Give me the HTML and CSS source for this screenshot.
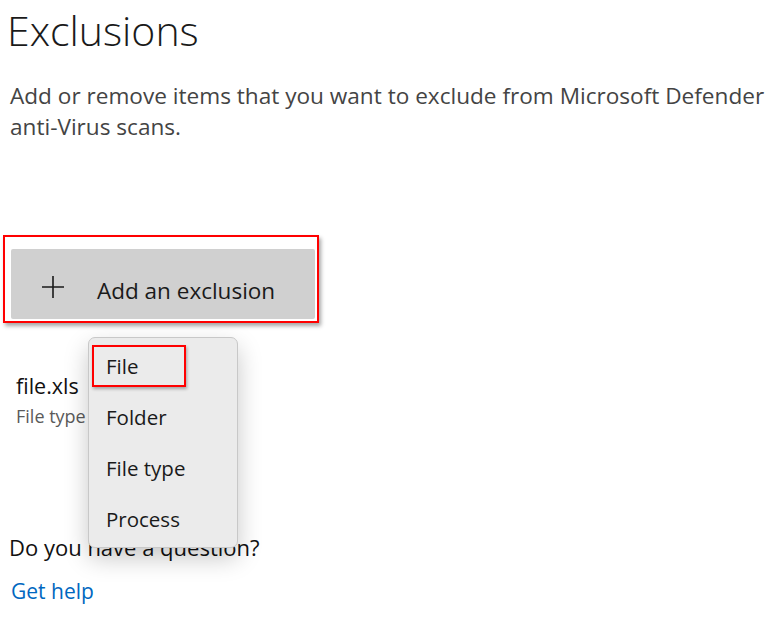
FILE: index.html
```html
<!DOCTYPE html>
<html>
<head>
<meta charset="utf-8">
<link rel="stylesheet" href="styles.css">
</head>
<body>
<div class="page">
  <h1 class="title">Exclusions</h1>
  <p class="desc">Add or remove items that you want to exclude from Microsoft Defender <span class="nowrap">anti-Virus</span> scans.</p>
  <div class="annot-btn">
    <button class="add-btn">
      <svg class="plus" width="24" height="24" viewBox="0 0 24 24"><path d="M12 1v22M1 12h22" stroke="#1a1a1a" stroke-width="1.6" fill="none"/></svg>
      <span>Add an exclusion</span>
    </button>
  </div>
  <div class="item">
    <div class="item-name">file.xls</div>
    <div class="item-type">File type</div>
  </div>
  <div class="help">
    <div class="question">Do you have a question?</div>
    <a class="link" href="#">Get help</a>
  </div>
  <div class="menu">
    <div class="menu-item">File</div>
    <div class="menu-item">Folder</div>
    <div class="menu-item">File type</div>
    <div class="menu-item">Process</div>
    <div class="annot-file"></div>
  </div>
</div>
</body>
</html>
```
FILE: styles.css
```css
html, body {
  margin: 0;
  padding: 0;
  background: #ffffff;
}
.page {
  position: relative;
  width: 774px;
  height: 625px;
  overflow: hidden;
  font-family: "Open Sans", "Noto Sans", sans-serif;
  color: #1a1a1a;
}
.title {
  margin: 0;
  padding: 2px 0 0 7px;
  font-size: 41px;
  font-weight: 300;
  line-height: 56px;
  color: #1a1a1a;
}
.desc {
  margin: 22px 0 0 10px;
  width: 764px;
  font-size: 22.6px;
  line-height: 31px;
  color: #444444;
}
.nowrap {
  white-space: nowrap;
}
.annot-btn {
  margin: 93px 0 0 3px;
  width: 304px;
  padding: 12px 2px 2px 6px;
  border: 2px solid #ff0000;
  box-shadow: 2px 3px 4px rgba(0,0,0,0.35);
  background: #fff;
}
.add-btn {
  display: flex;
  align-items: center;
  width: 304px;
  height: 70px;
  border: none;
  border-radius: 2px;
  background: #d0d0d0;
  padding: 13px 0 0 30px;
  font-family: inherit;
  font-size: 22.5px;
  color: #1a1a1a;
  gap: 32px;
  cursor: pointer;
}
.plus {
  flex: none;
  margin-top: -8px;
}
.item {
  margin: 49px 0 0 16px;
}
.item-name {
  font-size: 21.5px;
  line-height: 28px;
  color: #111;
}
.item-type {
  font-size: 18px;
  line-height: 33px;
  color: #5a5a5a;
}
.help {
  margin: 99px 0 0 9px;
}
.question {
  font-size: 22px;
  line-height: 30px;
  color: #111;
}
.link {
  display: inline-block;
  margin: 15px 0 0 2px;
  font-size: 21px;
  line-height: 28px;
  color: #0067c0;
  text-decoration: none;
}
.menu {
  position: absolute;
  left: 88px;
  top: 337px;
  width: 150px;
  height: 211px;
  box-sizing: border-box;
  padding-top: 13px;
  background: #ebebeb;
  border: 1px solid #c8c8c8;
  border-radius: 7px;
  box-shadow: 0 10px 24px rgba(0,0,0,0.22);
}
.menu-item {
  height: 51px;
  line-height: 30px;
  padding-left: 17px;
  font-size: 20.5px;
  color: #1a1a1a;
}
.annot-file {
  position: absolute;
  left: 3px;
  top: 7px;
  width: 90px;
  height: 38px;
  border: 2px solid #ff0000;
  box-shadow: 1px 2px 3px rgba(0,0,0,0.3);
}
```
